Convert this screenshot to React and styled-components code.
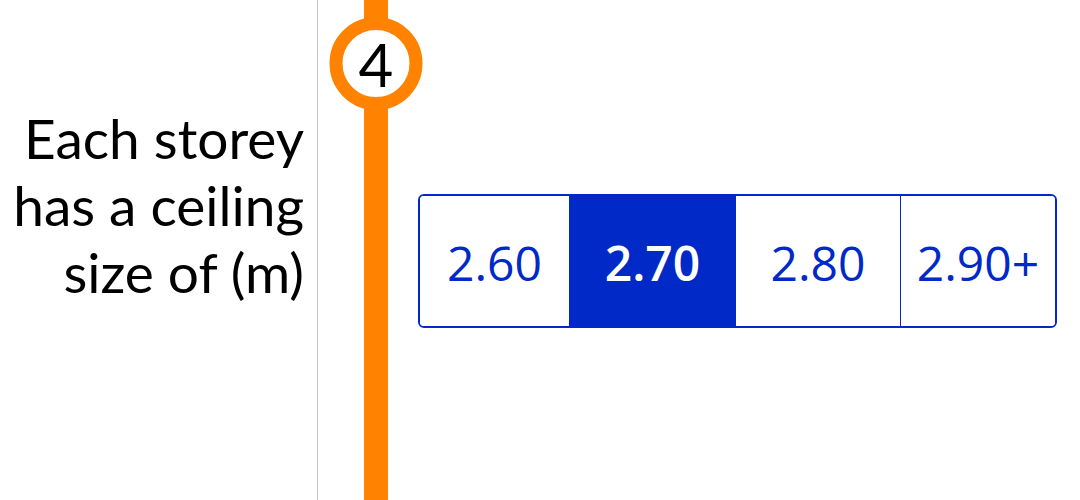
import React from "react";
import styled, { createGlobalStyle } from "styled-components";

const Global = createGlobalStyle`
  html, body { margin: 0; padding: 0; background: #ffffff; }
  body { width: 1080px; height: 500px; overflow: hidden; }
`;

const BLUE = "#0029c8";
const ORANGE = "#ff8200";

const Page = styled.div`
  display: flex;
  width: 1080px;
  height: 500px;
  background: #ffffff;
`;

const LabelColumn = styled.div`
  width: 318px;
  flex: 0 0 318px;
  border-right: 1px solid #c8c8c8;
  padding-top: 105px;
  padding-right: 13px;
  box-sizing: border-box;
`;

const Label = styled.div`
  font-family: Lato, "Liberation Sans", sans-serif;
  font-size: 55px;
  line-height: 67px;
  color: #000000;
  text-align: right;
  white-space: nowrap;
`;

const Track = styled.div`
  position: relative;
  width: 24px;
  flex: 0 0 24px;
  margin-left: 46px;
  background: ${ORANGE};
`;

const Marker = styled.div`
  position: absolute;
  top: 17px;
  left: 50%;
  transform: translateX(-50%);
  width: 93px;
  height: 93px;
  box-sizing: border-box;
  border: 13px solid ${ORANGE};
  border-radius: 50%;
  background: #ffffff;
  display: flex;
  align-items: center;
  justify-content: center;
  font-family: Lato, "Liberation Sans", sans-serif;
  font-size: 60px;
  line-height: 1;
  color: #000000;
`;

const Options = styled.div`
  display: flex;
  align-self: flex-start;
  margin-top: 194px;
  margin-left: 30px;
  height: 134px;
  box-sizing: border-box;
  border: 2px solid ${BLUE};
  border-radius: 6px;
  overflow: hidden;
`;

const Option = styled.div`
  width: ${(p) => p.$w}px;
  display: flex;
  align-items: center;
  justify-content: center;
  box-sizing: border-box;
  border-left: ${(p) => (p.$first ? "none" : `1px solid ${BLUE}`)};
  background: ${(p) => (p.$selected ? BLUE : "#ffffff")};
  color: ${(p) => (p.$selected ? "#ffffff" : BLUE)};
  font-family: "Open Sans", "Liberation Sans", sans-serif;
  font-weight: ${(p) => (p.$selected ? 600 : 400)};
  font-size: 48px;
  padding-top: 2px;
`;

const options = [
  { label: "2.60", w: 149 },
  { label: "2.70", w: 166, selected: true },
  { label: "2.80", w: 165 },
  { label: "2.90+", w: 155 },
];

export default function App() {
  return (
    <Page>
      <Global />
      <LabelColumn>
        <Label>
          Each storey
          <br />
          has a ceiling
          <br />
          size of (m)
        </Label>
      </LabelColumn>
      <Track>
        <Marker>4</Marker>
      </Track>
      <Options>
        {options.map((o, i) => (
          <Option key={o.label} $w={o.w} $first={i === 0} $selected={o.selected}>
            {o.label}
          </Option>
        ))}
      </Options>
    </Page>
  );
}
